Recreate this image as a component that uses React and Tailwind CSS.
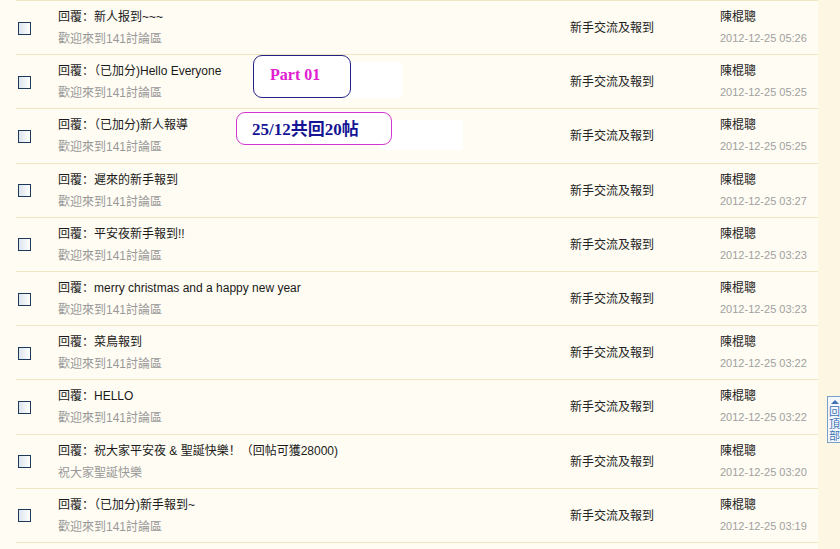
const rows = [
  { title: "回覆：新人报到~~~", sub: "歡迎來到141討論區", time: "2012-12-25 05:26" },
  { title: "回覆：（已加分)Hello Everyone", sub: "歡迎來到141討論區", time: "2012-12-25 05:25" },
  { title: "回覆：（已加分)新人報導", sub: "歡迎來到141討論區", time: "2012-12-25 05:25" },
  { title: "回覆：遲來的新手報到", sub: "歡迎來到141討論區", time: "2012-12-25 03:27" },
  { title: "回覆：平安夜新手報到!!", sub: "歡迎來到141討論區", time: "2012-12-25 03:23" },
  { title: "回覆：merry christmas and a happy new year", sub: "歡迎來到141討論區", time: "2012-12-25 03:23" },
  { title: "回覆：菜鳥報到", sub: "歡迎來到141討論區", time: "2012-12-25 03:22" },
  { title: "回覆：HELLO", sub: "歡迎來到141討論區", time: "2012-12-25 03:22" },
  { title: "回覆：祝大家平安夜 & 聖誕快樂！（回帖可獲28000)", sub: "祝大家聖誕快樂", time: "2012-12-25 03:20" },
  { title: "回覆：（已加分)新手報到~", sub: "歡迎來到141討論區", time: "2012-12-25 03:19" },
];

const Row = ({ row }) => {
  return (
    <div className="grid grid-cols-[42px_512px_150px_98px] h-[54.2px] border-t border-[#f1e6c4] box-border">
      <div className="flex items-center pl-[2px] pt-[1px]">
        <div className="w-[13px] h-[13px] border border-[#1d3a5a] bg-gradient-to-r from-[#dde4ec] to-white" />
      </div>
      <div className="flex flex-col pt-[8px] gap-[6px]">
        <span className="text-[12px] leading-[16px] text-[#1a1a1a]">{row.title}</span>
        <span className="text-[12px] leading-[16px] text-[#999]">{row.sub}</span>
      </div>
      <div className="flex items-center text-[12px] leading-[16px] text-[#222] pt-[1px]">
        新手交流及報到
      </div>
      <div className="flex flex-col pt-[8px] gap-[5px]">
        <span className="text-[12px] leading-[16px] text-[#222]">陳棍聰</span>
        <span className="text-[11px] leading-[16px] text-[#a0a0a0]">{row.time}</span>
      </div>
    </div>
  );
};

export default function App() {
  return (
    <div
      className="relative w-[840px] h-[549px] overflow-hidden bg-[#fdf6e2] flex"
      style={{ fontFamily: '"Liberation Sans", "Noto Sans CJK SC", sans-serif' }}
    >
      <div className="w-[818px] bg-[#fffcf3] pl-4">
        {rows.map((row, i) => (
          <Row key={i} row={row} />
        ))}
        <div className="border-t border-[#f1e6c4]" />
      </div>

      {/* annotations pasted over the list */}
      <div className="absolute left-[300px] top-[62px] w-[102px] h-[36px] bg-white" />
      <div className="absolute left-[253px] top-[55px] w-[98px] h-[43px] rounded-[9px] border border-[#23238a] bg-white">
        <span
          className="absolute left-[16px] top-[7px] text-[16px] font-bold text-[#e020d0]"
          style={{ fontFamily: '"Liberation Serif", serif' }}
        >
          Part 01
        </span>
      </div>
      <div className="absolute left-[380px] top-[120px] w-[83px] h-[30px] bg-white" />
      <div className="absolute left-[236px] top-[112px] w-[156px] h-[33px] rounded-[9px] border border-[#d236cf] bg-white">
        <span
          className="absolute left-[15px] top-[4px] text-[17px] font-bold text-[#141494] whitespace-nowrap"
          style={{ fontFamily: '"Liberation Serif", "Noto Sans CJK TC", serif' }}
        >
          25/12共回20帖
        </span>
      </div>

      {/* back to top */}
      <div className="absolute left-[827px] top-[396px] w-[18px] h-[47px] border border-[#7aa0c8] bg-[#f4f8fc] flex flex-col items-start pl-[1px] text-[#3f72b4] text-[11px] leading-[12px]">
        <svg width="10" height="6" viewBox="0 0 10 6" className="mt-[2px] ml-[1px] mb-[1px]">
          <path d="M1 5 L5 1 L9 5 Z" fill="#3f72b4" />
        </svg>
        <span className="h-[12px]">回</span>
        <span className="h-[12px]">頂</span>
        <span className="h-[12px]">部</span>
      </div>
    </div>
  );
}
